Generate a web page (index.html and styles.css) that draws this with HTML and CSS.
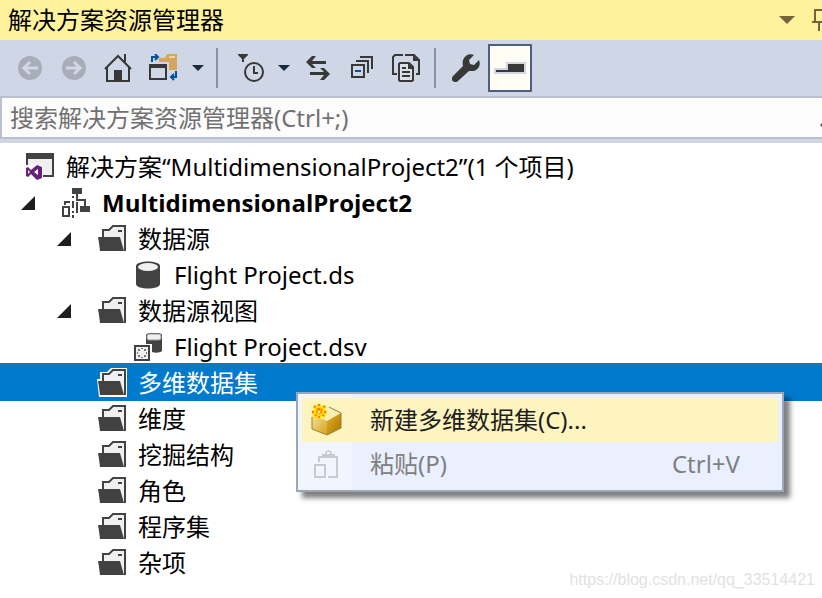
FILE: index.html
```html
<!DOCTYPE html>
<html lang="zh-CN">
<head>
  <meta charset="UTF-8" />
  <title>解决方案资源管理器</title>
  <meta name="viewport" content="width=device-width, initial-scale=1.0"/>
  <link rel="stylesheet" href="styles.css">
</head>
<body>
  <!-- Shared icons -->
  <svg class="sprite" aria-hidden="true">
    <symbol id="folder" viewBox="0 0 30 30">
      <path fill="currentColor" d="M3 4H10L14 0H30V29H2L0 11H3Z"/>
      <path fill="#f0f0f2" d="M6 7H13L17 3H28V26H6Z"/>
      <path fill="none" stroke="#424242" stroke-width="2" d="M6 14V6H12L16 2H28V27"/>
      <path fill="#424242" d="M1 13H23L25 20L27 27H3L2 19ZM21 6H25V8H21Z"/>
    </symbol>
    <symbol id="drop" viewBox="0 0 12 6">
      <path fill="#1b293e" d="M0 0H12L6 6Z"/>
    </symbol>
    <symbol id="expanded" viewBox="0 0 14 14">
      <path fill="#1e1e1e" d="M14 0V14H0Z"/>
    </symbol>
  </svg>

  <header class="titlebar">
    <h1>解决方案资源管理器</h1>
    <button class="title-button" aria-label="窗口位置">
      <svg width="16" height="8" viewBox="0 0 16 8"><path fill="#75633d" d="M0 0H16L8 8Z"/></svg>
    </button>
    <button class="title-button pin" aria-label="自动隐藏">
      <svg width="10" height="22" viewBox="0 0 10 22">
        <path fill="none" stroke="#75633d" stroke-width="2" d="M3 13V1H12V13M0 13H14M7 14V22"/>
      </svg>
    </button>
  </header>

  <div class="toolbar">
    <button class="tool" disabled aria-label="后退">
      <svg width="28" height="28" viewBox="0 0 28 28">
        <circle cx="14" cy="14" r="12" fill="#a9adb8"/>
        <path fill="none" stroke="#cfd6e5" stroke-width="3" d="M22 14H8M14 8L8 14L14 20"/>
      </svg>
    </button>
    <button class="tool" disabled aria-label="前进">
      <svg width="28" height="28" viewBox="0 0 28 28">
        <circle cx="14" cy="14" r="12" fill="#a9adb8"/>
        <path fill="none" stroke="#cfd6e5" stroke-width="3" d="M6 14H20M14 8L20 14L14 20"/>
      </svg>
    </button>
    <button class="tool" aria-label="主页">
      <svg width="28" height="28" viewBox="0 0 28 28">
        <path fill="none" stroke="#383838" stroke-width="2" d="M1 15L14 2L27 15M3 13V27H25V13M21 8V0"/>
        <path fill="#383838" d="M10 16H18V27H10Z"/>
      </svg>
    </button>
    <button class="tool wide" aria-label="同步视图">
      <svg width="28" height="28" viewBox="0 0 28 28">
        <path fill="#d7a65a" d="M10 4H16L18 0H28V16H20V8H10Z"/>
        <path fill="#e9d3ae" d="M20 2H26V4H20Z"/>
        <path fill="#383838" d="M0 10H18V26H0ZM2 14V24H16V14Z" fill-rule="evenodd"/>
        <path fill="none" stroke="#00539c" stroke-width="2" d="M3 8V3H9M6 0L9 3L6 6M27 17V23H22M25 20L22 23L25 26"/>
      </svg>
    </button>
    <button class="drop" aria-label="更多视图"><svg width="12" height="6"><use href="#drop"/></svg></button>
    <span class="separator"></span>
    <button class="tool wide" aria-label="挂起的更改筛选器">
      <svg width="40" height="28" viewBox="0 0 40 28">
        <path fill="#383838" d="M9 0H19V1L15 5V8H13V5L9 1Z"/>
        <circle cx="25" cy="18" r="9" fill="none" stroke="#383838" stroke-width="2"/>
        <path fill="none" stroke="#383838" stroke-width="2" d="M25 12V19H29"/>
      </svg>
    </button>
    <button class="drop" aria-label="更多筛选器"><svg width="12" height="6"><use href="#drop"/></svg></button>
    <button class="tool" aria-label="刷新">
      <svg width="28" height="28" viewBox="0 0 28 28">
        <path fill="#383838" d="M2 8L8 2H12L8 7H22V10H8L12 14H8ZM26 20L20 14H16L20 18H6V21H20L16 26H20Z"/>
      </svg>
    </button>
    <button class="tool" aria-label="全部折叠">
      <svg width="28" height="28" viewBox="0 0 28 28">
        <path fill="none" stroke="#383838" stroke-width="2" d="M4 11H16V23H4ZM8 7H20V19M12 3H24V15"/>
        <path fill="#00539c" d="M7 16H13V18H7Z"/>
      </svg>
    </button>
    <button class="tool" aria-label="显示所有文件">
      <svg width="28" height="28" viewBox="0 0 28 28">
        <path fill="none" stroke="#383838" stroke-width="2" d="M5 20H1V3L3 1H11M13 1H22L27 6V20H24"/>
        <path fill="#383838" d="M21 1L27 7H21Z"/>
        <path fill="#dcdfe8" stroke="#383838" stroke-width="2" d="M7 10L8 9H17L21 13V26L20 27H8L7 26Z"/>
        <path fill="none" stroke="#383838" stroke-width="2" d="M10 14H14M10 18H18M10 22H18"/>
        <path fill="#383838" d="M16 9L22 15H16Z"/>
      </svg>
    </button>
    <span class="separator"></span>
    <button class="tool" aria-label="属性">
      <svg width="28" height="28" viewBox="0 0 28 28">
        <path fill="#383838" d="M22 1L17 6L18 10L22 11L27 6C29 11 27 15 22 17C20 17 18 17 17 17L6 27C4 29 1 28 0 26C0 24 0 23 1 22L11 12C10 8 11 4 14 2C16 0 19 0 22 1Z"/>
      </svg>
    </button>
    <button class="tool toggled" aria-label="预览选定项">
      <svg width="32" height="12" viewBox="0 0 32 12">
        <path fill="#cfd6e5" d="M0 6H12V0H32V12H0Z"/>
        <path fill="#383838" d="M2 8H14V2H30V10H2Z"/>
      </svg>
    </button>
  </div>

  <div class="search">
    <input type="text" aria-label="搜索解决方案资源管理器" placeholder="搜索解决方案资源管理器(Ctrl+;)">
    <svg width="2" height="18" viewBox="0 0 2 18"><path fill="#555" d="M2 14V18L0 16Z"/></svg>
  </div>

  <main class="panel">
    <ul class="tree">
      <li class="row root">
        <svg class="icon" width="30" height="28" viewBox="0 0 30 28">
          <path fill="#f0f0f2" d="M2 4H28V24H2Z"/>
          <path fill="#424242" d="M1 0H29V24H18V22H27V6H3V12H1Z"/>
          <path fill="#fff" d="M0 12H18V28H0Z"/>
          <path fill="#68217a" fill-rule="evenodd" d="M12 12L17 14V25L12 27L6 21L3 24L1 23V15L3 14L6 17ZM13 16L9 19L13 22ZM3 17V21L5 19Z"/>
        </svg>
        <span>解决方案“MultidimensionalProject2”(1 个项目)</span>
      </li>
      <li class="row level1">
        <button class="expander" aria-label="折叠"><svg width="14" height="14"><use href="#expanded"/></svg></button>
        <svg class="icon" width="30" height="30" viewBox="0 0 30 30">
          <path fill="#424242" d="M11 0H21V6H17V11H25V18H29V24H19V18H23V13H15V6H11Z"/>
          <path fill="none" stroke="#424242" stroke-width="2" d="M2 19H8V28H2ZM3 14H9M4 14V17M12 8V10M12 13V20M12 23V25M12 27V30M16 14V25"/>
        </svg>
        <span class="project">MultidimensionalProject2</span>
      </li>
      <li class="row level2">
        <button class="expander" aria-label="折叠"><svg width="14" height="14"><use href="#expanded"/></svg></button>
        <svg class="icon" width="30" height="30"><use href="#folder"/></svg>
        <span>数据源</span>
      </li>
      <li class="row level3">
        <span class="expander"></span>
        <svg class="icon" width="30" height="28" viewBox="0 0 30 28">
          <path fill="#424242" d="M3 5C3-1 27-1 27 5V23C27 29 3 29 3 23Z"/>
          <ellipse cx="15" cy="6" rx="10" ry="4" fill="#f0f0f2"/>
        </svg>
        <span>Flight Project.ds</span>
      </li>
      <li class="row level2">
        <button class="expander" aria-label="折叠"><svg width="14" height="14"><use href="#expanded"/></svg></button>
        <svg class="icon" width="30" height="30"><use href="#folder"/></svg>
        <span>数据源视图</span>
      </li>
      <li class="row level3">
        <span class="expander"></span>
        <svg class="icon" width="30" height="28" viewBox="0 0 30 28">
          <path fill="#424242" d="M13 2C13-1 29-1 29 2V18C27 20 22 20 19 19V11H13Z"/>
          <rect x="14" y="1" width="14" height="6" rx="2" fill="#f0f0f2" stroke="#999"/>
          <path fill="#f0f0f2" stroke="#424242" stroke-width="2" d="M2 13H16V27H2Z"/>
          <path fill="#777" d="M5 16H7V18H5ZM11 16H13V18H11ZM5 22H7V24H5ZM11 22H13V24H11ZM8 15H10V16H8ZM8 24H10V25H8ZM4 19H5V21H4ZM13 19H14V21H13Z"/>
        </svg>
        <span>Flight Project.dsv</span>
      </li>
      <li class="row level2 selected">
        <span class="expander"></span>
        <svg class="icon" width="30" height="30"><use href="#folder"/></svg>
        <span>多维数据集</span>
      </li>
      <li class="row level2">
        <span class="expander"></span>
        <svg class="icon" width="30" height="30"><use href="#folder"/></svg>
        <span>维度</span>
      </li>
      <li class="row level2">
        <span class="expander"></span>
        <svg class="icon" width="30" height="30"><use href="#folder"/></svg>
        <span>挖掘结构</span>
      </li>
      <li class="row level2">
        <span class="expander"></span>
        <svg class="icon" width="30" height="30"><use href="#folder"/></svg>
        <span>角色</span>
      </li>
      <li class="row level2">
        <span class="expander"></span>
        <svg class="icon" width="30" height="30"><use href="#folder"/></svg>
        <span>程序集</span>
      </li>
      <li class="row level2">
        <span class="expander"></span>
        <svg class="icon" width="30" height="30"><use href="#folder"/></svg>
        <span>杂项</span>
      </li>
    </ul>

    <div class="context-menu">
      <button class="menu-item active">
        <svg width="32" height="32" viewBox="0 0 32 32">
          <defs>
            <linearGradient id="gold" x1="0" y1="0" x2="1" y2="1">
              <stop offset="0" stop-color="#f8e39a"/>
              <stop offset="1" stop-color="#d3a11c"/>
            </linearGradient>
            <linearGradient id="dark-gold" x1="0" y1="0" x2="1" y2="1">
              <stop offset="0" stop-color="#e5b223"/>
              <stop offset="1" stop-color="#a87400"/>
            </linearGradient>
          </defs>
          <path fill="#fbeeb8" d="M3 10L19 3L31 9L17 17Z"/>
          <path fill="url(#gold)" d="M2 10L17 17V31L2 25Z"/>
          <path fill="url(#dark-gold)" d="M17 17L31 9V24L17 31Z"/>
          <path fill="none" stroke="#9a8038" d="M2 13V25L17 31L31 24V9L19 3"/>
          <path fill="none" stroke="#ffe100" stroke-width="4" d="M9 0V15M2 8H17M4 2L15 13M15 2L4 13"/>
          <path fill="none" stroke="#ff7a00" stroke-width="2" stroke-dasharray="2 2" d="M9 0V16M2 8H17M4 2L15 13M15 2L4 13"/>
          <circle cx="9" cy="8" r="2" fill="#fff6a0" stroke="#ff8a00"/>
        </svg>
        <span class="label">新建多维数据集(C)...</span>
      </button>
      <button class="menu-item" disabled>
        <svg width="32" height="32" viewBox="0 0 32 32">
          <path fill="none" stroke="#c8cad2" stroke-width="2" d="M5 17H15V29H5ZM9 14V9H27V29H18"/>
          <path fill="#c8cad2" fill-rule="evenodd" d="M12 6H15C15 1 22 1 22 6H25V10H12ZM17 6H20V4H17Z"/>
        </svg>
        <span class="label">粘贴(P)</span>
        <span>Ctrl+V</span>
      </button>
    </div>
  </main>

  <div class="watermark">https://blog.csdn.net/qq_33514421</div>
</body>
</html>
```
FILE: styles.css
```css
* {
  box-sizing: border-box;
}

body {
  margin: 0;
  min-height: 100vh;
  position: relative;
  display: flex;
  flex-direction: column;
  overflow-x: hidden;
  background: #fff;
  color: #000;
  font-family: "Noto Sans", "Noto Sans CJK SC", sans-serif;
  font-size: 24px;
  line-height: 36px;
}

button, input {
  font: inherit;
  color: inherit;
  border: none;
  background: none;
  padding: 0;
}

svg {
  display: block;
  flex: none;
}

.sprite {
  position: absolute;
  width: 0;
  height: 0;
}

.titlebar {
  display: flex;
  align-items: center;
  height: 40px;
  padding-left: 8px;
  gap: 17px;
  background: #fff29d;
}

.titlebar h1 {
  flex: 1;
  margin: 0;
  font-size: 24px;
  font-weight: normal;
}

.toolbar {
  display: flex;
  align-items: center;
  height: 56px;
  padding-left: 8px;
  background: #cfd6e5;
}

.tool, .drop {
  display: flex;
  align-items: center;
  justify-content: center;
  width: 44px;
  height: 48px;
}

.tool.wide {
  width: 46px;
}

.drop {
  width: 24px;
}

.tool.toggled {
  border: 2px solid #4d6082;
  background: #fffcf4;
}

.separator {
  width: 2px;
  height: 40px;
  margin: 0 8px 0 6px;
  background: #8591a7;
}

.search {
  display: flex;
  align-items: center;
  height: 43px;
  border: 2px solid #b9c1d1;
  border-right: none;
  background: #fcfcfc;
}

.search input {
  flex: 1;
  min-width: 0;
  padding-left: 8px;
  outline: none;
}

.search input::placeholder {
  color: #717171;
  opacity: 1;
}

.panel {
  flex: 1;
  border-top: 4px solid #cfd6e5;
}

.tree {
  list-style: none;
  margin: 0;
  padding: 6px 0 16px;
}

.row {
  display: flex;
  align-items: center;
  height: 36px;
  white-space: pre;
}

.row .icon {
  margin-right: 11px;
  color: #fff;
}

.root {
  padding-left: 25px;
}

.level1 {
  padding-left: 21px;
}

.level2 {
  padding-left: 57px;
}

.level3 {
  padding-left: 93px;
}

.expander {
  flex: none;
  width: 40px;
}

.project {
  font-family: "Open Sans", sans-serif;
  font-weight: bold;
}

.selected {
  background: #007acc;
  box-shadow: 0 -2px 0 #007acc;
  color: #fff;
}

/* Context menu over the tree */
.context-menu {
  position: absolute;
  left: 296px;
  top: 392px;
  width: 488px;
  padding: 4px;
  border: 2px solid #9ba7b7;
  background: linear-gradient(to right, #f2f4fe 54px, #eaf0ff 54px);
  box-shadow: 6px 6px 5px rgba(0, 0, 0, 0.5);
}

.menu-item {
  display: flex;
  align-items: center;
  width: 100%;
  height: 44px;
  padding: 0 38px 0 8px;
  text-align: left;
  color: #1e1e1e;
}

.menu-item.active {
  background: #fdf4bf;
}

.menu-item:disabled {
  color: #808080;
}

.menu-item .label {
  flex: 1;
  margin-left: 28px;
}

.watermark {
  position: absolute;
  right: 7px;
  bottom: 8px;
  font-family: "Liberation Sans", sans-serif;
  font-size: 16px;
  line-height: 20px;
  color: #e2e2e2;
}
```
